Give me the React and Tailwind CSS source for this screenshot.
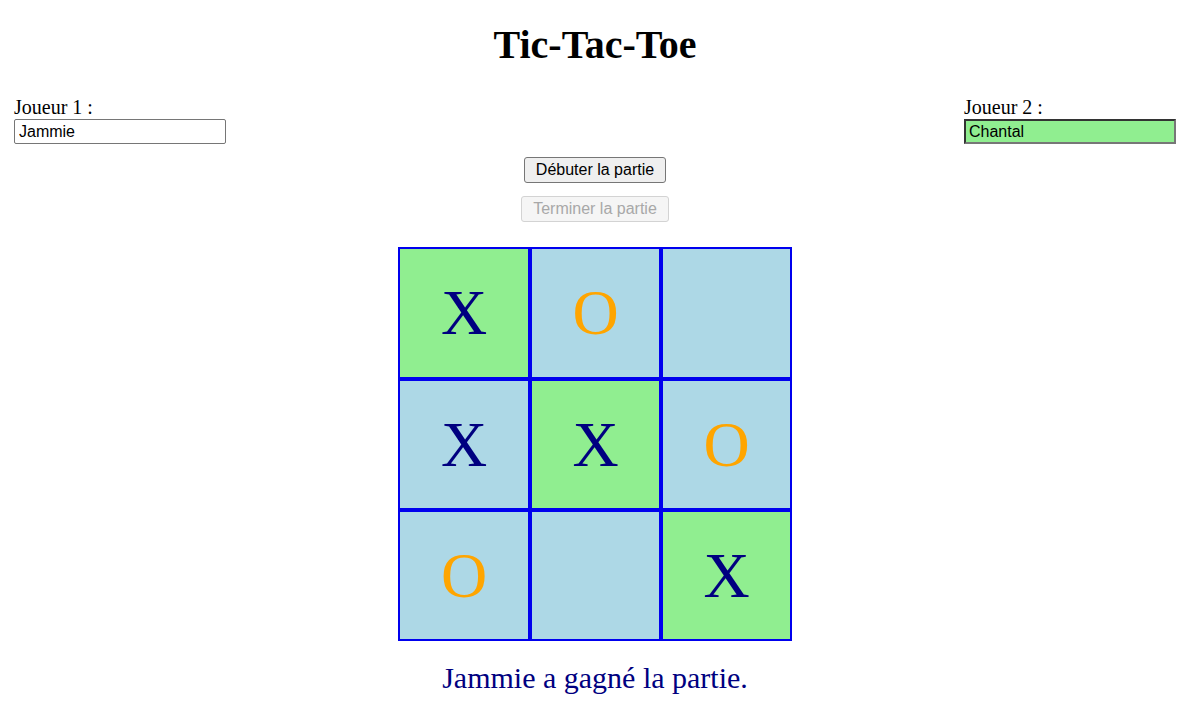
export default function App() {
  const cells = [
    { v: "X", win: true },
    { v: "O" },
    { v: "" },
    { v: "X" },
    { v: "X", win: true },
    { v: "O" },
    { v: "O" },
    { v: "" },
    { v: "X", win: true },
  ];
  const serif = { fontFamily: '"Liberation Serif", "Times New Roman", serif' };
  return (
    <div className="w-[1190px] min-h-[704px] bg-white text-black" style={serif}>
      <h1 className="pt-[23px] text-center text-[40px] font-bold leading-[43px] h-[66px]">Tic-Tac-Toe</h1>
      <div className="mt-[30px] flex justify-between px-[14px]">
        <div className="flex flex-col">
          <span className="text-[20px] leading-[23px]">Joueur 1 :</span>
          <input
            readOnly
            value="Jammie"
            className="w-[212px] h-[25px] border border-[#767676] rounded-[2px] px-[4px] text-[16px] bg-white outline-none"
            style={{ fontFamily: '"Liberation Sans", Arial, sans-serif' }}
          />
        </div>
        <div className="flex flex-col">
          <span className="text-[20px] leading-[23px]">Joueur 2 :</span>
          <input
            readOnly
            value="Chantal"
            className="w-[212px] h-[25px] border-2 border-t-[#333] border-l-[#333] border-b-[#777] border-r-[#777] px-[3px] text-[16px] bg-[#90ee90] outline-none"
            style={{ fontFamily: '"Liberation Sans", Arial, sans-serif' }}
          />
        </div>
      </div>
      <div className="mt-[13px] flex flex-col items-center gap-[13px]" style={{ fontFamily: '"Liberation Sans", Arial, sans-serif' }}>
        <button className="h-[26px] px-[11px] text-[16px] leading-none bg-[#efefef] border border-[#767676] rounded-[3px] text-black">
          Débuter la partie
        </button>
        <button disabled className="h-[26px] px-[11px] text-[16px] leading-none bg-[#f5f5f5] border border-[#d3d3d3] rounded-[3px] text-[#a8a8a8]">
          Terminer la partie
        </button>
      </div>
      <div className="mt-[25px] flex justify-center">
        <div className="grid grid-cols-[128px_127px_127px] grid-rows-[128px_127px_127px] gap-[4px] p-[2px] bg-[#0000ee]">
          {cells.map((c, i) => (
            <div
              key={i}
              className={
                "flex items-center justify-center text-[64px] leading-none " +
                (c.win ? "bg-[#90ee90]" : "bg-[#add8e6]") +
                (c.v === "X" ? " text-[#000080]" : " text-[#ffa500]")
              }
            >
              {c.v}
            </div>
          ))}
        </div>
      </div>
      <p className="mt-[20px] text-center text-[30px] leading-[34px] text-[#000080]">Jammie a gagné la partie.</p>
    </div>
  );
}
